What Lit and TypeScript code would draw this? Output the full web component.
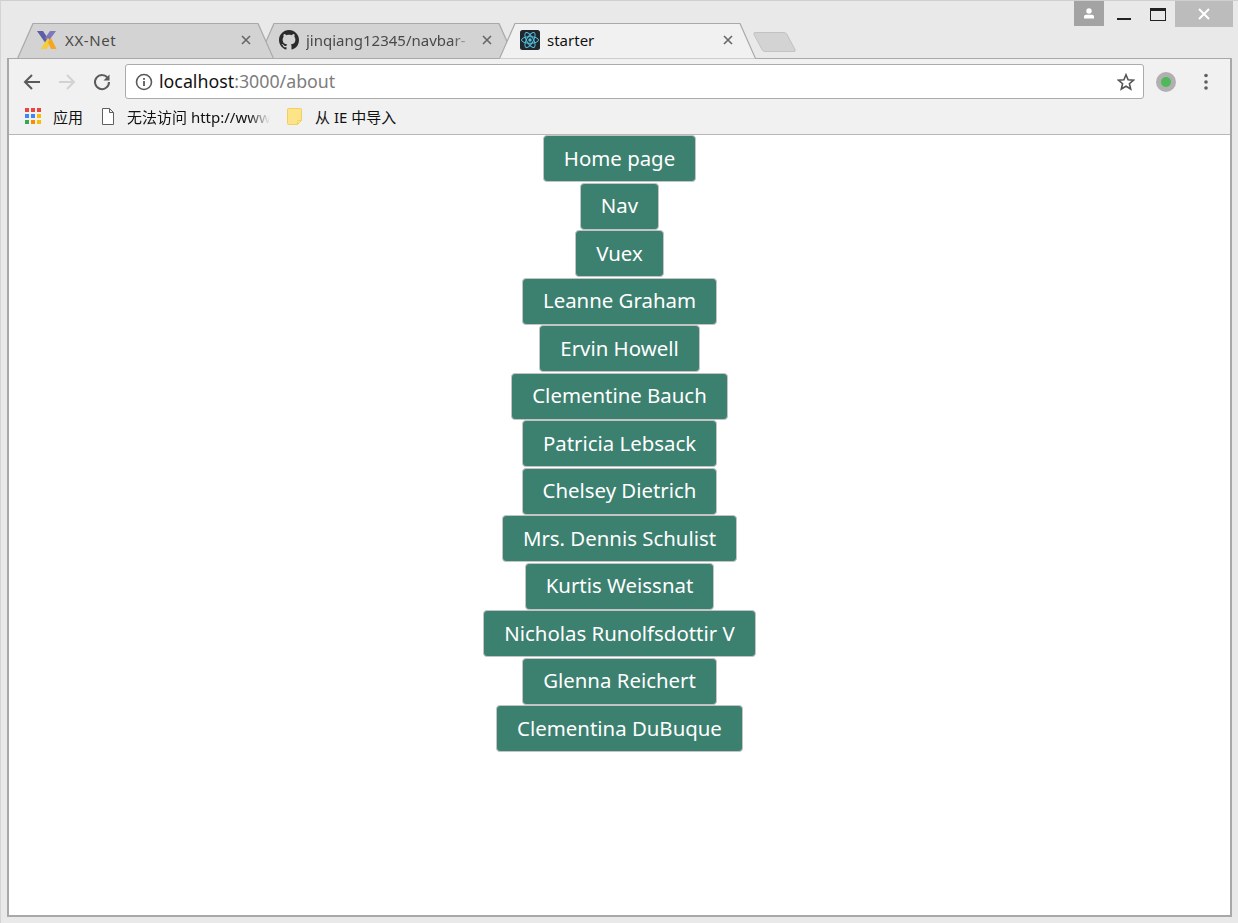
import { LitElement, css, html, svg } from "lit";
import { customElement } from "lit/decorators.js";

const NAMES = [
  "Home page",
  "Nav",
  "Vuex",
  "Leanne Graham",
  "Ervin Howell",
  "Clementine Bauch",
  "Patricia Lebsack",
  "Chelsey Dietrich",
  "Mrs. Dennis Schulist",
  "Kurtis Weissnat",
  "Nicholas Runolfsdottir V",
  "Glenna Reichert",
  "Clementina DuBuque"
];

const APP_COLORS = [
  "#e8453c", "#e8453c", "#e8453c",
  "#4285f4", "#4285f4", "#fbbc05",
  "#34a853", "#fb8c00", "#fbbc05"
];

const xxIcon = svg`<svg width="20" height="20" viewBox="0 0 20 20">
  <path d="M0 1h6l5 7.500-3 4z" fill="#5c5fa6"/>
  <path d="M19 1h-6l-5 7 3 4z" fill="#7d78bb"/>
  <path d="M8 12.500l3-4.500 3 4-4 7h-6.500z" fill="#f7cb3f"/>
  <path d="M11 12l3-4 5.500 11h-5.500z" fill="#f5a623"/>
</svg>`;

const githubIcon = svg`<svg width="20" height="20" viewBox="0 0 16 16">
  <path fill="#2b2b2b" d="M8 0C3.580 0 0 3.580 0 8c0 3.540 2.290 6.530 5.470 7.590.4.070.55-.17.55-.38 0-.19-.01-.82-.01-1.490-2.010.37-2.530-.49-2.690-.94-.09-.23-.48-.94-.82-1.130-.28-.15-.68-.52-.01-.53.630-.01 1.080.58 1.230.82.720 1.210 1.870.87 2.330.66.070-.52.280-.87.510-1.070-1.780-.2-3.640-.89-3.640-3.950 0-.87.310-1.590.820-2.150-.08-.2-.36-1.020.08-2.120 0 0 .67-.21 2.200.82.640-.18 1.320-.27 2-.27s1.360.09 2 .27c1.530-1.040 2.200-.82 2.200-.82.440 1.100.16 1.920.08 2.120.51.560.82 1.270.82 2.150 0 3.070-1.870 3.750-3.650 3.950.29.250.54.730.54 1.480 0 1.070-.01 1.930-.01 2.200 0 .21.150.46.550.38A8.010 8.010 0 0016 8c0-4.420-3.580-8-8-8z"/>
</svg>`;

const reactIcon = svg`<svg width="20" height="20" viewBox="0 0 20 20">
  <rect width="20" height="20" rx="2.500" fill="#20272d"/>
  <g fill="none" stroke="#53c1de" stroke-width="1">
    <ellipse cx="10" cy="10" rx="8.500" ry="3.300"/>
    <ellipse cx="10" cy="10" rx="8.500" ry="3.300" transform="rotate(60 10 10)"/>
    <ellipse cx="10" cy="10" rx="8.500" ry="3.300" transform="rotate(120 10 10)"/>
  </g>
  <circle cx="10" cy="10" r="1.700" fill="#53c1de"/>
</svg>`;

const closeIcon = html`<svg class="close" width="10" height="10" viewBox="0 0 10 10">
  <path d="M1 1l8 8M9 1l-8 8" stroke="#666" stroke-width="1.600" fill="none"/>
</svg>`;

@customElement("app-root")
export class AppRoot extends LitElement {
  static styles = css`
    :host {
      display: flex;
      flex-direction: column;
      width: 1238px;
      height: 923px;
      box-sizing: border-box;
      background: #e9e9e9;
      border-top: 1px solid #cfcfcf;
      border-left: 1px solid #d4d4d4;
      font-family: "Noto Sans", "Noto Sans CJK SC", sans-serif;
      overflow: hidden;
    }

    .topbar {
      display: flex;
      flex: none;
      height: 57px;
      position: relative;
      z-index: 1;
    }

    .tabs {
      display: flex;
      align-items: flex-start;
      padding: 22px 0 0 16px;
    }

    .tab {
      position: relative;
      display: flex;
      align-items: center;
      flex: none;
      box-sizing: border-box;
      width: 257px;
      height: 36px;
      margin-right: -16px;
      padding: 0 23px 3px 20px;
      font-size: 15px;
      color: #4a4a4a;
    }

    .tab:nth-child(1) {
      z-index: 2;
      letter-spacing: 0.600px;
    }

    .tab:nth-child(3) {
      z-index: 3;
      color: #111;
    }

    .shape {
      position: absolute;
      left: 0;
      top: 0;
    }

    .fav {
      position: relative;
      display: flex;
      flex: none;
      margin-right: 8px;
    }

    .tab:nth-child(n + 2) .fav {
      margin-left: 1px;
      margin-right: 7px;
    }

    .tab-title {
      position: relative;
      flex: 1;
      min-width: 0;
      white-space: nowrap;
      overflow: hidden;
    }

    .tab:nth-child(2) .tab-title {
      -webkit-mask-image: linear-gradient(to right, #000 88%, transparent 100%);
      mask-image: linear-gradient(to right, #000 88%, transparent 100%);
    }

    .close {
      position: relative;
      flex: none;
      margin-left: 10px;
    }

    .newtab {
      flex: none;
      margin: 8px 0 0 13px;
      position: relative;
    }

    .controls {
      display: flex;
      align-items: flex-start;
      margin-left: auto;
      padding-right: 5px;
    }

    .profile {
      display: flex;
      align-items: center;
      justify-content: center;
      width: 30px;
      height: 25px;
      background: #a3a3a3;
    }

    .win {
      display: flex;
      justify-content: center;
      height: 26px;
    }

    .win.min {
      width: 40px;
    }

    .win.max {
      width: 28px;
    }

    .win.close-btn {
      width: 58px;
      margin-left: 3px;
      background: #bcbcbc;
      align-items: center;
    }

    .window {
      display: flex;
      flex-direction: column;
      flex: 1;
      min-height: 0;
      margin: 0 6px 6px 6px;
      border: 2px solid #a8a8a8;
      border-top: 1px solid #a8a8a8;
      background: #fff;
    }

    .chrome {
      flex: none;
      height: 76px;
      box-sizing: border-box;
      background: #f1f1f1;
      border-bottom: 1px solid #b8b8b8;
      display: flex;
      flex-direction: column;
    }

    .toolbar {
      display: flex;
      align-items: center;
      height: 41px;
      flex: none;
      box-sizing: border-box;
      padding: 5px 0 1px 13px;
    }

    .nav {
      display: flex;
      width: 35px;
      flex: none;
    }

    .omnibox {
      display: flex;
      align-items: center;
      flex: none;
      box-sizing: border-box;
      width: 1019px;
      height: 35px;
      margin-left: -2px;
      padding: 0 8px 2px 9px;
      background: #fff;
      border: 1px solid #ababab;
      border-radius: 3px;
      font-size: 17.800px;
      color: #7d7d7d;
    }

    .omnibox svg {
      flex: none;
      margin-top: 2px;
    }

    .info {
      margin-right: 6px;
    }

    .host {
      color: #111;
    }

    .star {
      margin-left: auto;
    }

    .ext {
      display: flex;
      margin-left: 12px;
      flex: none;
    }

    .dots {
      display: flex;
      margin-left: 28px;
      flex: none;
    }

    .bookmarks {
      display: flex;
      align-items: center;
      flex: 1;
      padding: 0 0 2px 16px;
      font-size: 15px;
      color: #111;
    }

    .mark {
      display: flex;
      align-items: center;
      flex: none;
      white-space: nowrap;
    }

    .mark svg {
      flex: none;
    }

    .apps {
      width: 76px;
      gap: 11px;
    }

    .page {
      width: 186px;
      gap: 12px;
    }

    .page span {
      width: 143px;
      overflow: hidden;
      -webkit-mask-image: linear-gradient(to right, #000 85%, transparent 100%);
      mask-image: linear-gradient(to right, #000 85%, transparent 100%);
    }

    .folder {
      gap: 12px;
    }

    .content {
      display: flex;
      flex-direction: column;
      align-items: center;
      gap: 0.500px;
      flex: 1;
      min-height: 0;
    }

    .btn {
      display: flex;
      align-items: center;
      justify-content: center;
      box-sizing: border-box;
      flex: none;
      height: 47px;
      padding: 0 20px 2px;
      background: #3c8070;
      border: 1px solid #c4c4c4;
      border-radius: 4px;
      color: #fff;
      font-size: 20.400px;
      font-family: "Noto Sans", sans-serif;
      white-space: nowrap;
    }
  `;

  private tab(title: string, icon: unknown, active: boolean) {
    const fill = active ? "#f1f1f1" : "#d3d3d3";
    return html`<div class="tab">
      <svg class="shape" width="257" height="36" viewBox="0 0 257 36">
        <path d="M0.500 35.500L15.500 0.500H241.500L256.500 35.500z" fill=${fill} />
        <path
          d=${active
            ? "M0.500 35.500L16 0.500H241L256.500 35.500"
            : "M0.500 35.500L16 0.500H241L256.500 35.500z"}
          fill="none"
          stroke="#a9a9a9"
          stroke-width="1.200"
        />
      </svg>
      <span class="fav">${icon}</span>
      <span class="tab-title">${title}</span>
      ${closeIcon}
    </div>`;
  }

  render() {
    return html`
      <div class="topbar">
        <div class="tabs">
          ${this.tab("XX-Net", xxIcon, false)}
          ${this.tab("jinqiang12345/navbar-", githubIcon, false)}
          ${this.tab("starter", reactIcon, true)}
          <svg class="newtab" width="44" height="22" viewBox="0 0 44 22">
            <path
              d="M2 1.500H31Q33 1.500 34 3.500L42 18.500Q43 20.500 41 20.500H12Q10 20.500 9 18.500L1 3.500Q0.500 1.500 2 1.500z"
              fill="#d3d3d3"
              stroke="#c2c2c2"
            />
          </svg>
        </div>
        <div class="controls">
          <div class="profile">
            <svg width="12" height="11" viewBox="0 0 12 11">
              <circle cx="6" cy="3" r="2.700" fill="#fff" />
              <path d="M1 10.500V8.500Q1 7 3 6.800H9Q11 7 11 8.500V10.500z" fill="#fff" />
            </svg>
          </div>
          <div class="win min">
            <svg width="14" height="26" viewBox="0 0 14 26">
              <rect y="17" width="14" height="2" fill="#222" />
            </svg>
          </div>
          <div class="win max">
            <svg width="16" height="26" viewBox="0 0 16 26">
              <rect x="0.500" y="7.500" width="15" height="12" fill="none" stroke="#222" />
              <rect x="0" y="7" width="16" height="3" fill="#222" />
            </svg>
          </div>
          <div class="win close-btn">
            <svg width="12" height="12" viewBox="0 0 12 12">
              <path d="M1 1l10 10M11 1l-10 10" stroke="#fff" stroke-width="2" fill="none" />
            </svg>
          </div>
        </div>
      </div>
      <div class="window">
        <div class="chrome">
          <div class="toolbar">
            <span class="nav">
              <svg width="20" height="20" viewBox="0 0 20 20">
                <path d="M18 10H3M10 3l-7 7 7 7" fill="none" stroke="#5a5a5a" stroke-width="2" />
              </svg>
            </span>
            <span class="nav">
              <svg width="20" height="20" viewBox="0 0 20 20">
                <path d="M2 10H17M10 3l7 7-7 7" fill="none" stroke="#d2d2d2" stroke-width="2" />
              </svg>
            </span>
            <span class="nav">
              <svg width="20" height="20" viewBox="0 0 20 20">
                <path d="M16 6.500A7 7 0 1 0 17 10" fill="none" stroke="#5a5a5a" stroke-width="2" />
                <path d="M17.500 2.500V8.500H11.500z" fill="#5a5a5a" />
              </svg>
            </span>
            <div class="omnibox">
              <svg class="info" width="18" height="18" viewBox="0 0 18 18">
                <circle cx="9" cy="9" r="7.500" fill="none" stroke="#5a5a5a" stroke-width="1.600" />
                <rect x="8.100" y="8" width="1.800" height="5" fill="#5a5a5a" />
                <rect x="8.100" y="5" width="1.800" height="1.800" fill="#5a5a5a" />
              </svg>
              <span><span class="host">localhost</span>:3000/about</span>
              <svg class="star" width="18" height="18" viewBox="0 0 18 18">
                <path
                  d="M9 1.800l2.100 5 5.400.4-4.100 3.500 1.300 5.300L9 13.200 4.300 16l1.300-5.300-4.100-3.500 5.400-.4z"
                  fill="none"
                  stroke="#555"
                  stroke-width="1.600"
                />
              </svg>
            </div>
            <span class="ext">
              <svg width="20" height="20" viewBox="0 0 20 20">
                <circle cx="10" cy="10" r="10" fill="#b0b0b0" />
                <circle cx="10" cy="10" r="5" fill="#4fb858" />
              </svg>
            </span>
            <span class="dots">
              <svg width="4" height="18" viewBox="0 0 4 18">
                <circle cx="2" cy="2.500" r="1.800" fill="#5f5f5f" />
                <circle cx="2" cy="9" r="1.800" fill="#5f5f5f" />
                <circle cx="2" cy="15" r="1.800" fill="#5f5f5f" />
              </svg>
            </span>
          </div>
          <div class="bookmarks">
            <div class="mark apps">
              <svg width="17" height="17" viewBox="0 0 17 17">
                ${APP_COLORS.map(
                  (c, i) => svg`<rect x=${(i % 3) * 6} y=${Math.floor(i / 3) * 6} width="4" height="4" fill=${c} />`
                )}
              </svg>
              <span>应用</span>
            </div>
            <div class="mark page">
              <svg width="14" height="17" viewBox="0 0 14 17">
                <path d="M1.500 .5H8.500L12.500 4.500V16.500H1.500zM8.500 .5V4.500H12.500" fill="#fff" stroke="#5f5f5f" />
              </svg>
              <span>无法访问 http://www</span>
            </div>
            <div class="mark folder">
              <svg width="16" height="17" viewBox="0 0 16 17">
                <path d="M.5 1.500Q.5 .5 1.500 .5H13.500Q14.500 .5 14.500 1.500V12.500L10.500 16.500H1.500Q.5 16.500 .5 15.500z" fill="#fde488" stroke="#f3cf5f" />
                <path d="M10.500 16.500V13.500Q10.500 12.500 11.500 12.500H14.500" fill="none" stroke="#f3cf5f" />
              </svg>
              <span>从 IE 中导入</span>
            </div>
          </div>
        </div>
        <div class="content">
          ${NAMES.map(name => html`<div class="btn">${name}</div>`)}
        </div>
      </div>
    `;
  }
}
